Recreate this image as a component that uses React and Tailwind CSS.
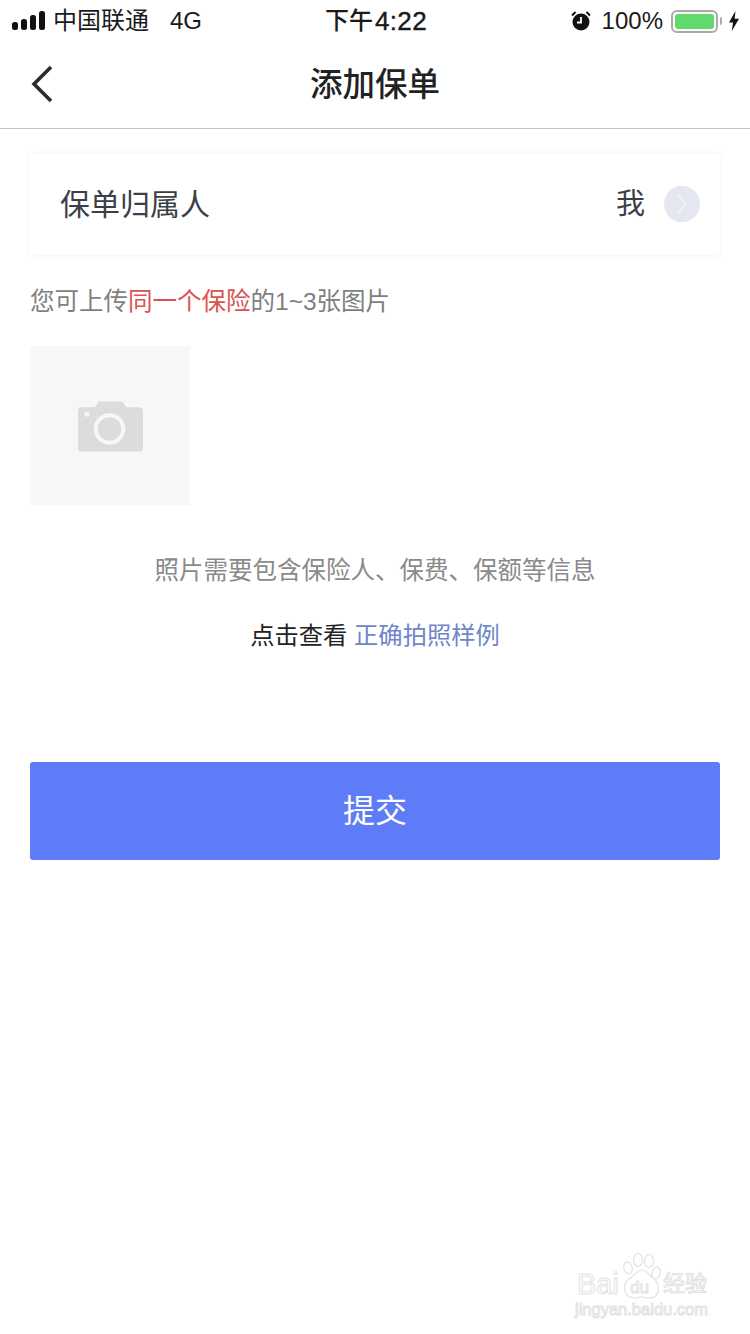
import React from 'react';

const cjk = "font-['Liberation_Sans','Noto_Sans_CJK_SC',sans-serif]";

const SignalBars = () => (
  <svg width="34" height="20" viewBox="0 0 34 20">
    <rect x="0" y="11" width="6" height="8" rx="2.5" fill="#111" />
    <rect x="9" y="8" width="6" height="11" rx="2.5" fill="#111" />
    <rect x="18" y="4" width="6" height="15" rx="2.5" fill="#111" />
    <rect x="27" y="0" width="6" height="19" rx="2.5" fill="#111" />
  </svg>
);

const AlarmIcon = () => (
  <svg width="20" height="22" viewBox="0 0 20 22">
    <circle cx="10" cy="12" r="8.5" fill="#111" />
    <path d="M10 7v5.5H6" fill="none" stroke="#fff" strokeWidth="1.8" />
    <path d="M1 5.5 4.5 2M19 5.5 15.5 2" stroke="#111" strokeWidth="2" />
  </svg>
);

const Battery = () => (
  <div className="flex items-center">
    <div className="w-[47px] h-[23px] rounded-[6px] border-2 border-[#a9aba9] p-[2px]">
      <div className="w-full h-full rounded-[3px] bg-[#62d96b]" />
    </div>
    <div className="ml-[2px] w-[2px] h-[8px] rounded-r-sm bg-[#a9aba9]" />
  </div>
);

const BoltIcon = () => (
  <svg width="12" height="20" viewBox="0 0 12 20">
    <path d="M7.5 0 1 11.5h4L3.8 20 11 7.8H6.6z" fill="#111" />
  </svg>
);

const StatusBar = () => (
  <div className="h-[42px] flex items-center justify-between pl-[12px] pr-[10px] text-[#1a1a1a]">
    <div className="flex items-center w-[260px]">
      <SignalBars />
      <span className="ml-[7px] text-[24px] leading-none">中国联通</span>
      <span className="ml-[21px] text-[24px] leading-none">4G</span>
    </div>
    <div className="flex items-center leading-none">
      <span className="text-[24px] font-medium">下午</span>
      <span className="ml-[2px] text-[26px] tracking-[0.4px] [-webkit-text-stroke:0.4px_#1a1a1a]">4:22</span>
    </div>
    <div className="flex items-center justify-end w-[260px]">
      <AlarmIcon />
      <span className="ml-[11px] mr-[8px] text-[24px] leading-none">100%</span>
      <Battery />
      <span className="ml-[6px]"><BoltIcon /></span>
    </div>
  </div>
);

const NavBar = () => (
  <div className="relative h-[87px] flex items-center justify-center border-b border-[#c2c2c2]">
    <svg className="absolute left-[30px] top-[23px]" width="24" height="38" viewBox="0 0 24 38">
      <path d="M21 2 4 19l17 17" fill="none" stroke="#2b2b2b" strokeWidth="3.6" />
    </svg>
    <h1 className="text-[32.5px] leading-none font-medium text-[#222]">添加保单</h1>
  </div>
);

const OwnerRow = () => (
  <div className="mt-[25px] h-[101px] flex items-center justify-between pl-[30px] pr-[20px] bg-white shadow-[0_0_6px_rgba(0,0,0,0.06)]">
    <span className="text-[30px] leading-none text-[#3c3f47]">保单归属人</span>
    <div className="flex items-center">
      <span className="text-[29px] leading-none text-[#3c3f47]">我</span>
      <div className="ml-[19px] mb-[1px] w-[36px] h-[36px] rounded-full bg-[#e4e6f0] flex items-center justify-center">
        <svg width="14" height="22" viewBox="0 0 14 22">
          <path d="M3 2l8 9-8 9" fill="none" stroke="#f4f5fa" strokeWidth="1.6" />
        </svg>
      </div>
    </div>
  </div>
);

const PhotoTile = () => (
  <div className="mt-[30px] w-[160px] h-[159px] bg-[#f7f7f7] flex items-center justify-center">
    <svg className="ml-[1px]" width="65" height="52" viewBox="0 0 66 52">
      <path d="M4 7h13l4-6h24l4 6h13a4 4 0 0 1 4 4v37a4 4 0 0 1-4 4H4a4 4 0 0 1-4-4V11a4 4 0 0 1 4-4z" fill="#dcdcdc" />
      <circle cx="32" cy="29" r="14" fill="none" stroke="#f7f7f7" strokeWidth="4" />
      <circle cx="9" cy="14" r="2.5" fill="#f7f7f7" />
    </svg>
  </div>
);

const Watermark = () => (
  <div className="absolute left-[575px] top-[1252px] w-[140px] h-[68px] text-white [-webkit-text-stroke:1px_#e2e2e2] pointer-events-none">
    <svg className="absolute left-[47px] top-[1px]" width="40" height="46" viewBox="0 0 40 46">
      <g fill="#fff" stroke="#e2e2e2" strokeWidth="1.2">
        <ellipse cx="6" cy="15" rx="4" ry="6" transform="rotate(-15 6 15)" />
        <ellipse cx="16" cy="7" rx="4.5" ry="6.5" />
        <ellipse cx="27" cy="8" rx="4.5" ry="6.5" />
        <ellipse cx="34" cy="20" rx="4" ry="6" transform="rotate(15 34 20)" />
        <path d="M20 17c5 0 7 5 12 9 6 5 7 19-5 19-3 0-5-1-7-1s-4 1-7 1C1 45 0 31 7 26c6-4 8-9 13-9z" />
      </g>
    </svg>
    <span className="absolute left-[2px] top-[18px] text-[29px] leading-none font-['Liberation_Sans',sans-serif]">Bai</span>
    <span className="absolute left-[55px] top-[27px] text-[17px] leading-none font-['Liberation_Sans',sans-serif]">du</span>
    <span className="absolute left-[88px] top-[21px] text-[22px] leading-none whitespace-nowrap">经验</span>
    <span className="absolute left-0 top-[49px] text-[16.5px] leading-none whitespace-nowrap font-['Liberation_Sans',sans-serif]">jingyan.baidu.com</span>
  </div>
);

const App = () => {
  return (
    <div className={`relative w-[750px] h-[1334px] bg-white overflow-hidden ${cjk}`}>
      <StatusBar />
      <NavBar />
      <div className="px-[30px]">
        <OwnerRow />
        <p className="mt-[33px] text-[24.5px] leading-[28px] text-[#7f7f7f]">
          您可上传<span className="text-[#d9534f]">同一个保险</span>的1~3张图片
        </p>
        <PhotoTile />
        <p className="mt-[52px] text-center text-[24.5px] leading-[28px] text-[#8a8a8a]">
          照片需要包含保险人、保费、保额等信息
        </p>
        <p className="mt-[37px] text-center text-[24.3px] leading-[28px] text-[#222]">
          点击查看 <span className="text-[#6f86c9]">正确拍照样例</span>
        </p>
        <button className="mt-[112px] w-full h-[98px] rounded-[3px] bg-[#5f7cf8] text-white text-[32px] leading-none">
          提交
        </button>
      </div>
      <Watermark />
    </div>
  );
};

export default App;
